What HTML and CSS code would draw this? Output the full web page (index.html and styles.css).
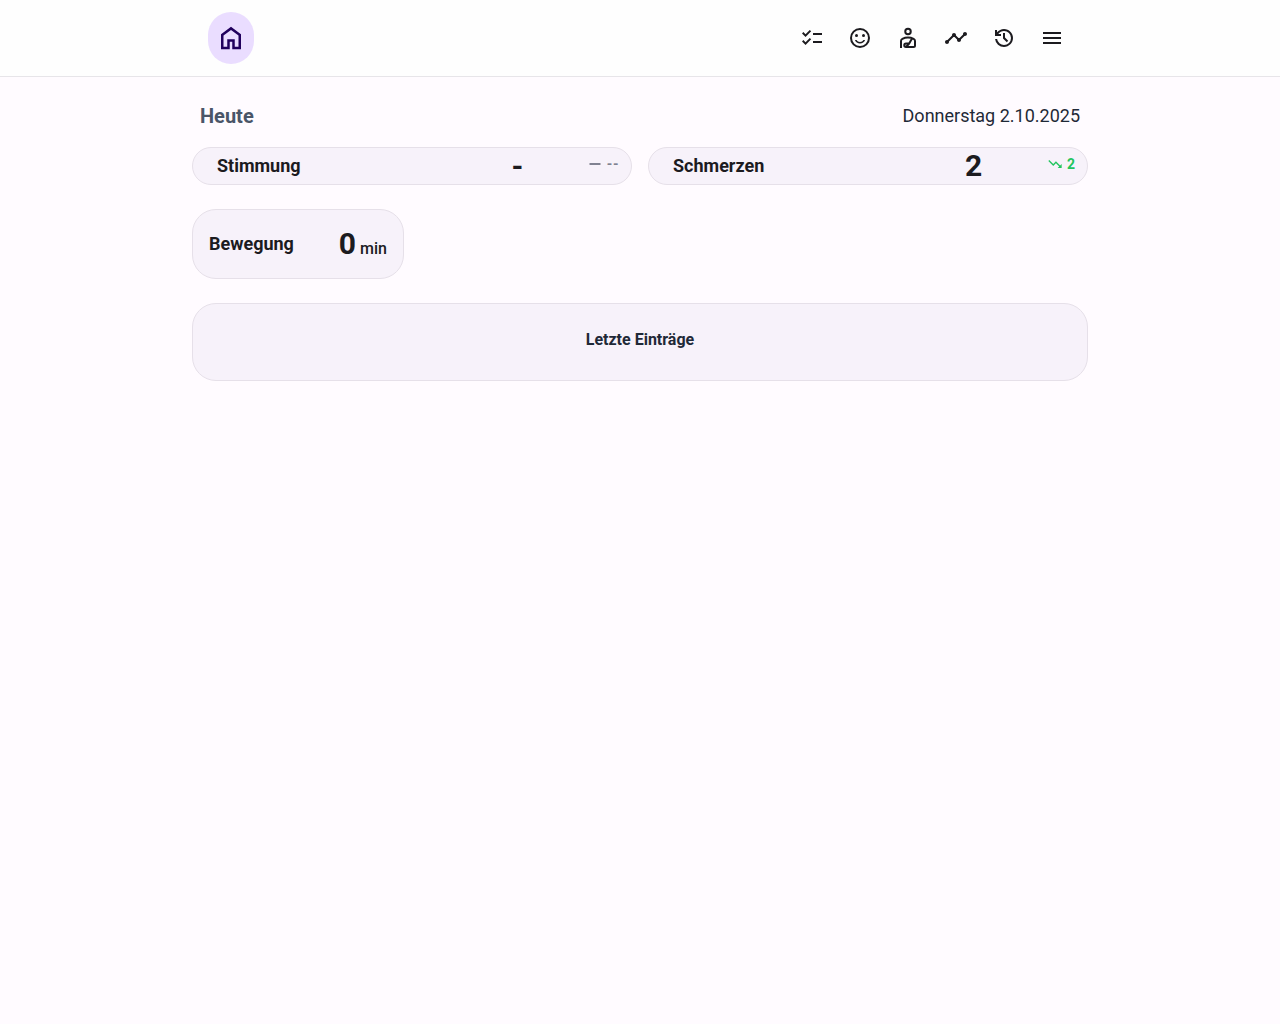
FILE: index.html
```html
<!DOCTYPE html>
<html lang="de">
<head>
<meta charset="utf-8">
<title>Heute</title>
<link rel="stylesheet" href="styles.css">
</head>
<body>
<header class="topbar">
  <nav class="nav">
    <a class="home"><svg class="icon-home" viewBox="0 -960 960 960"><path d="M240-200h120v-240h240v240h120v-360L480-740 240-560v360Zm-80 80v-480l320-240 320 240v480H520v-240h-80v240H160Z"/></svg></a>
    <div class="links">
      <svg viewBox="0 -960 960 960"><path d="M222-200 80-342l56-56 85 85 170-170 56 57-225 226Zm0-320L80-662l56-56 85 85 170-170 56 57-225 226Zm298 240v-80h360v80H520Zm0-320v-80h360v80H520Z"/></svg>
      <svg viewBox="0 0 24 24"><circle class="line" cx="12" cy="12" r="9"/><circle cx="8.5" cy="9.5" r="1.5"/><circle cx="15.500" cy="9.500" r="1.5"/><path d="M12 17.500c2.330 0 4.310-1.460 5.110-3.500h-1.650c-.7 1.190-1.970 2-3.460 2s-2.760-.81-3.450-2H6.900c.8 2.040 2.770 3.500 5.100 3.500Z"/></svg>
      <svg viewBox="0 0 24 24"><circle class="line" cx="12" cy="5.500" r="2.750"/><path class="line" d="M5 22v-7q0-1.500 1.400-2.200Q9 11.500 12 11.500t5.600 1.300Q19 13.500 19 15v4.500q0 1.500-1.500 1.500H10a1.750 1.750 0 0 1 0-3.500h3.200L16 12.500M10 21l3.200-3.500"/></svg>
      <svg viewBox="0 0 24 24"><path d="M23 8c0 1.100-.9 2-2 2-.18 0-.35-.02-.51-.07l-3.560 3.550c.05.16.07.34.07.52 0 1.100-.9 2-2 2s-2-.9-2-2c0-.18.02-.36.07-.52l-2.550-2.550c-.16.05-.34.07-.52.07s-.36-.02-.52-.07l-4.550 4.560c.05.16.07.33.07.51 0 1.100-.9 2-2 2s-2-.9-2-2 .9-2 2-2c.18 0 .35.02.51.07l4.560-4.550C8.020 9.360 8 9.180 8 9c0-1.100.9-2 2-2s2 .9 2 2c0 .18-.02.36-.07.52l2.550 2.550c.16-.05.34-.07.52-.07s.36.02.52.07l3.550-3.560C19.020 8.350 19 8.180 19 8c0-1.100.9-2 2-2s2 .9 2 2z"/></svg>
      <svg viewBox="0 -960 960 960"><path d="M480-120q-138 0-240.500-91.500T122-440h82q14 104 92.500 172T480-200q117 0 198.500-81.500T760-480q0-117-81.500-198.500T480-760q-69 0-129 32t-101 88h110v80H120v-240h80v94q51-64 124.500-99T480-840q75 0 140.500 28.500t114 77q48.500 48.500 77 114T840-480q0 75-28.500 140.500t-77 114q-48.500 48.500-114 77T480-120Zm112-192L440-464v-216h80v184l128 128-56 56Z"/></svg>
      <svg viewBox="0 0 24 24"><path d="M3 18v-2h18v2H3Zm0-5v-2h18v2H3Zm0-5V6h18v2H3Z"/></svg>
    </div>
  </nav>
</header>
<main class="page">
  <div class="heading"><h1 class="title">Heute</h1><span class="date">Donnerstag 2.10.2025</span></div>
  <div class="pair">
    <section class="card stat">
      <h2 class="label">Stimmung</h2><span class="value">-</span>
      <span class="trend flat"><svg viewBox="0 0 16 16"><path d="M2.500 7h11v2h-11z"/></svg>--</span>
    </section>
    <section class="card stat">
      <h2 class="label">Schmerzen</h2><span class="value">2</span>
      <span class="trend better"><svg viewBox="0 0 24 24"><path d="M16 18l2.290-2.290-4.880-4.880-4 4L2 7.410 3.410 6l6 6 4-4 6.300 6.290L22 12v6z"/></svg>2</span>
    </section>
  </div>
  <section class="card activity">
    <h2 class="label">Bewegung</h2>
    <div class="amount"><span class="number">0</span><span class="unit">min</span></div>
  </section>
  <section class="card entries"><h2 class="entries-title">Letzte Einträge</h2></section>
</main>
</body>
</html>
```
FILE: styles.css
```css
* { box-sizing: border-box; }
body {
  margin: 0;
  min-height: 100vh;
  background: #fffbff;
  color: #1c1b1f;
  font: 400 16px/24px Roboto, sans-serif;
}
h1, h2 { margin: 0; }
svg { display: block; fill: currentColor; }
.line { fill: none; stroke: currentColor; stroke-width: 2; }
.topbar { height: 77px; background: #fefefe; border-bottom: 1px solid #e7e5e9; }
.nav {
  width: 896px;
  height: 76px;
  margin: 0 auto;
  padding: 0 16px;
  display: flex;
  align-items: center;
  justify-content: space-between;
}
.home {
  width: 46px;
  height: 52px;
  border-radius: 24px;
  background: #eaddff;
  color: #21005d;
  display: grid;
  place-items: center;
}
.icon-home { width: 30px; height: 30px; }
.links { display: flex; gap: 24px; padding-right: 8px; }
.links svg { width: 24px; height: 24px; }
.page { width: 896px; margin: 0 auto; padding-top: 24px; }
.heading {
  height: 30px;
  margin-bottom: 16px;
  padding: 0 8px;
  display: flex;
  align-items: center;
  justify-content: space-between;
}
.title { font-size: 20px; font-weight: 700; line-height: 28px; color: #4a5568; }
.date { font-size: 18px; line-height: 28px; color: #1f2937; }
.card { background: #f7f2fa; border: 1px solid #e6e0e9; border-radius: 24px; }
.pair { display: grid; grid-template-columns: 1fr 1fr; gap: 16px; }
.stat {
  height: 38px;
  padding: 0 12px 0 24px;
  display: grid;
  grid-template-columns: 1fr 117px 43px;
  align-items: center;
}
.label { font-size: 18px; font-weight: 700; line-height: 28px; }
.value { font-size: 30px; font-weight: 700; line-height: 36px; text-align: center; }
.trend {
  display: flex;
  align-items: center;
  justify-content: flex-end;
  gap: 4px;
  padding-bottom: 4px;
  font-size: 14px;
  font-weight: 700;
  line-height: 20px;
  color: #808291;
}
.trend svg { width: 16px; height: 16px; }
.flat { letter-spacing: .6px; }
.better { color: #22c55e; }
.activity {
  width: 212px;
  height: 70px;
  margin-top: 24px;
  padding: 0 16px;
  display: flex;
  align-items: center;
  justify-content: space-between;
}
.amount { display: flex; align-items: baseline; gap: 4px; }
.number { font-size: 30px; font-weight: 700; line-height: 36px; }
.unit { font-weight: 500; }
.entries { height: 78px; margin-top: 24px; padding-top: 24px; text-align: center; }
.entries-title { font-size: 16px; font-weight: 700; line-height: 24px; color: #1f2937; }
```
